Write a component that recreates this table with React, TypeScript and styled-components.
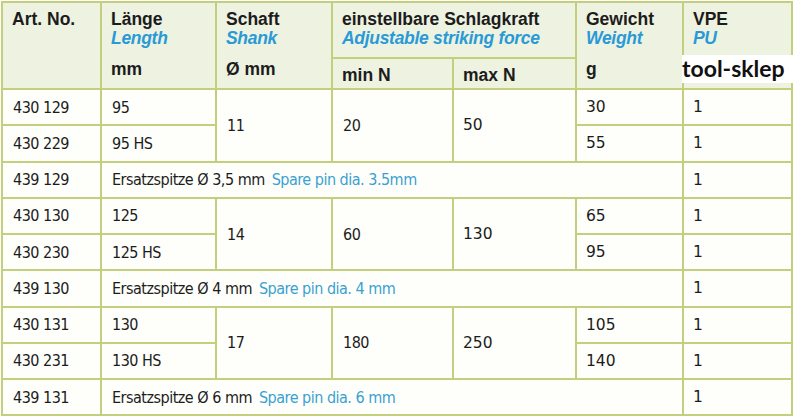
import styled, { createGlobalStyle } from 'styled-components';

const GlobalStyle = createGlobalStyle`
    html, body {
        margin: 0;
        padding: 0;
        background: #ffffff;
    }
`

const Page = styled.div`
    padding: 1px 0 0 1px;
    width: 793px;
    height: 416px;
    box-sizing: border-box;
    overflow: hidden;
`

const Table = styled.table`
    border-collapse: collapse;
    table-layout: fixed;
    width: 790px;
    font-family: "Liberation Sans", Arial, sans-serif;
    color: #1c1c1c;
`

const Row = styled.tr<{ $h: number }>`
    height: ${p => p.$h}px;
`

const Head = styled.th<{ $mark?: boolean }>`
    position: ${p => (p.$mark ? 'relative' : 'static')};
    background: #eef2e1;
    border: 2px solid #c4cf7e;
    padding: 7px 6px 0 9px;
    text-align: left;
    vertical-align: top;
    font-weight: 700;
`

const SubHead = styled.th`
    background: #eef2e1;
    border: 2px solid #c4cf7e;
    padding: 4px 6px 0 9px;
    text-align: left;
    vertical-align: middle;
    font-size: 17.5px;
    line-height: 19px;
    font-weight: 700;
`

const Title = styled.div`
    font-size: 17.5px;
    line-height: 19px;
    font-weight: 700;
    white-space: nowrap;
`

const Sub = styled.div`
    font-size: 17.5px;
    line-height: 19px;
    font-weight: 700;
    font-style: italic;
    letter-spacing: -0.3px;
    color: #2a9ad6;
    white-space: nowrap;
`

const Unit = styled.div`
    margin-top: 12px;
    font-size: 17.5px;
    line-height: 19px;
    font-weight: 700;
`

const Watermark = styled.div`
    position: absolute;
    left: -2px;
    right: -4px;
    top: 52px;
    height: 28px;
    background: #ffffff;
    padding-left: 0;
    font-family: Lato, "Open Sans", sans-serif;
    font-weight: 700;
    font-size: 23px;
    line-height: 26px;
    color: #111111;
`

const Cell = styled.td<{ $alt?: boolean }>`
    background: #fefffb;
    border: 2px solid #c4cf7e;
    padding: 0 6px 0 ${p => (p.$alt ? 9 : 10)}px;
    vertical-align: middle;
    white-space: nowrap;
    font-family: ${p => (p.$alt
        ? '"DejaVu Sans", Verdana, sans-serif'
        : '"DejaVu Sans Condensed", "Liberation Sans", sans-serif')};
    font-size: ${p => (p.$alt ? 15.5 : 16)}px;
    letter-spacing: ${p => (p.$alt ? 0 : -0.5)}px;
`

const Spare = styled.span`
    margin-left: 7px;
    color: #3a9fd2;
`

type Group = {
    shank: string
    min: string
    max: string
    items: [string, string, string][]
    spare: [string, string, string]
}

const groups: Group[] = [
    {
        shank: '11', min: '20', max: '50',
        items: [['430 129', '95', '30'], ['430 229', '95 HS', '55']],
        spare: ['439 129', 'Ersatzspitze Ø 3,5 mm', 'Spare pin dia. 3.5mm'],
    },
    {
        shank: '14', min: '60', max: '130',
        items: [['430 130', '125', '65'], ['430 230', '125 HS', '95']],
        spare: ['439 130', 'Ersatzspitze Ø 4 mm', 'Spare pin dia. 4 mm'],
    },
    {
        shank: '17', min: '180', max: '250',
        items: [['430 131', '130', '105'], ['430 231', '130 HS', '140']],
        spare: ['439 131', 'Ersatzspitze Ø 6 mm', 'Spare pin dia. 6 mm'],
    },
]

const widths = [99, 115, 116, 121, 123, 107, 109]

const App = () => {
    return (
        <Page>
            <GlobalStyle />
            <Table>
                <colgroup>
                    {widths.map((w, i) => <col key={i} style={{ width: w }} />)}
                </colgroup>
                <thead>
                    <Row $h={56}>
                        <Head rowSpan={2}><Title>Art. No.</Title></Head>
                        <Head rowSpan={2}>
                            <Title>Länge</Title>
                            <Sub>Length</Sub>
                            <Unit>mm</Unit>
                        </Head>
                        <Head rowSpan={2}>
                            <Title>Schaft</Title>
                            <Sub>Shank</Sub>
                            <Unit>Ø mm</Unit>
                        </Head>
                        <Head colSpan={2}>
                            <Title>einstellbare Schlagkraft</Title>
                            <Sub>Adjustable striking force</Sub>
                        </Head>
                        <Head rowSpan={2}>
                            <Title>Gewicht</Title>
                            <Sub>Weight</Sub>
                            <Unit>g</Unit>
                        </Head>
                        <Head rowSpan={2} $mark>
                            <Title>VPE</Title>
                            <Sub>PU</Sub>
                            <Watermark>tool-sklep</Watermark>
                        </Head>
                    </Row>
                    <Row $h={31}>
                        <SubHead>min N</SubHead>
                        <SubHead>max N</SubHead>
                    </Row>
                </thead>
                <tbody>
                    {groups.map(g => [
                        ...g.items.map((it, i) => (
                            <Row $h={36.25} key={it[0]}>
                                <Cell>{it[0]}</Cell>
                                <Cell>{it[1]}</Cell>
                                {i == 0 && (
                                    <>
                                        <Cell rowSpan={2}>{g.shank}</Cell>
                                        <Cell rowSpan={2}>{g.min}</Cell>
                                        <Cell rowSpan={2} $alt>{g.max}</Cell>
                                    </>
                                )}
                                <Cell $alt>{it[2]}</Cell>
                                <Cell $alt>1</Cell>
                            </Row>
                        )),
                        <Row $h={36.25} key={g.spare[0]}>
                            <Cell>{g.spare[0]}</Cell>
                            <Cell colSpan={5}>
                                {g.spare[1]}
                                <Spare>{g.spare[2]}</Spare>
                            </Cell>
                            <Cell $alt>1</Cell>
                        </Row>,
                    ])}
                </tbody>
            </Table>
        </Page>
    )
}

export default App;
